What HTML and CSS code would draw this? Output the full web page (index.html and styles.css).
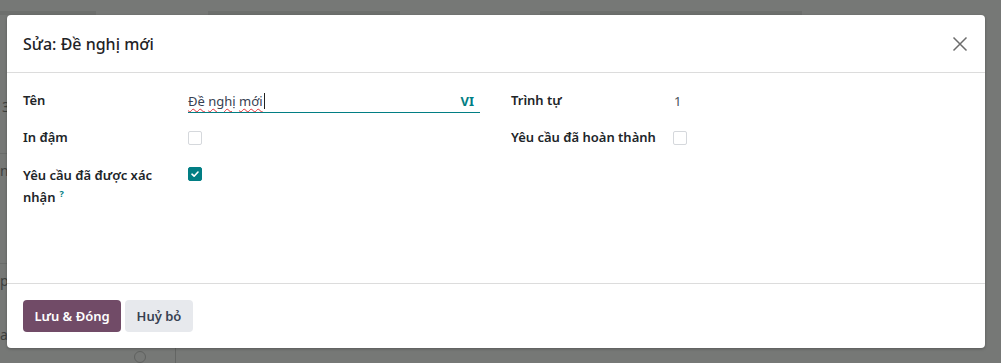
FILE: index.html
```html
<!DOCTYPE html>
<html lang="vi">
<head>
<meta charset="utf-8">
<title>Sửa: Đề nghị mới</title>
<link rel="stylesheet" href="styles.css">
</head>
<body>
<div class="backdrop">
  <div class="bg-strip">
    <span class="bg-box b1"></span>
    <span class="bg-box b2"></span>
    <span class="bg-box b3"></span>
  </div>
  <div class="bg-line l1"></div>
  <div class="bg-line l2"></div>
  <div class="bg-vline"></div>
  <div class="bg-circle"></div>
  <div class="bg-frag f1">3</div>
  <div class="bg-frag f2">n</div>
  <div class="bg-frag f3">pa</div>
  <div class="bg-frag f4">a</div>
</div>

<div class="modal">
  <header class="modal-header">
    <h4 class="modal-title">Sửa: Đề nghị mới</h4>
    <button class="close" aria-label="Đóng">
      <svg width="16" height="16" viewBox="0 0 16 16"><path d="M1.5 1.5 L14.5 14.5 M14.5 1.5 L1.5 14.5" stroke="#6c6c6c" stroke-width="1.5" fill="none"/></svg>
    </button>
  </header>
  <section class="modal-body">
    <div class="col">
      <div class="row">
        <label class="lbl">Tên</label>
        <div class="field input">
          <span class="val"><span class="sp">Đề</span> <span class="sp">nghị</span> <span class="sp">mới</span><span class="caret"></span></span>
          <span class="lang">VI</span>
        </div>
      </div>
      <div class="row">
        <label class="lbl">In đậm</label>
        <div class="field"><span class="cb"></span></div>
      </div>
      <div class="row">
        <label class="lbl tall">Yêu cầu đã được xác nhận<span class="help">?</span></label>
        <div class="field">
          <span class="cb checked">
            <svg width="10" height="10" viewBox="0 0 10 10"><path d="M2 5.2 L4.1 7.2 L8 3" stroke="#fff" stroke-width="1.6" fill="none" stroke-linecap="round" stroke-linejoin="round"/></svg>
          </span>
        </div>
      </div>
    </div>
    <div class="col">
      <div class="row">
        <label class="lbl rl">Trình tự</label>
        <div class="field"><span class="num">1</span></div>
      </div>
      <div class="row">
        <label class="lbl rl">Yêu cầu đã hoàn thành</label>
        <div class="field"><span class="cb"></span></div>
      </div>
    </div>
  </section>
  <footer class="modal-footer">
    <button class="btn primary">Lưu &amp; Đóng</button>
    <button class="btn secondary">Huỷ bỏ</button>
  </footer>
</div>
</body>
</html>
```

FILE: styles.css
```css
* { box-sizing: border-box; }
html, body { margin: 0; padding: 0; }
body {
  width: 1001px;
  height: 363px;
  overflow: hidden;
  background: #767876;
  font-family: "Noto Sans", "Open Sans", "Liberation Sans", sans-serif;
  color: #212529;
  position: relative;
}
.backdrop { position: absolute; inset: 0; }
.bg-strip { position: absolute; left: 0; top: 11px; width: 1001px; height: 4px; }
.bg-box { position: absolute; top: 0; height: 4px; background: #6d6f6d; }
.b1 { left: 0; width: 96px; }
.b2 { left: 208px; width: 192px; }
.b3 { left: 540px; width: 262px; }
.bg-line { position: absolute; left: 0; width: 7px; height: 1px; background: #6a6c6a; }
.l1 { top: 153px; }
.l2 { top: 263px; }
.bg-vline { position: absolute; left: 175px; top: 348px; width: 1px; height: 15px; background: #636563; }
.bg-circle { position: absolute; left: 134px; top: 351px; width: 12px; height: 12px; border: 1px solid #5f615f; border-radius: 50%; }
.bg-frag { position: absolute; left: 0; font-size: 14px; color: #3e403e; line-height: 1; }
.f1 { top: 100px; left: 2px; }
.f2 { top: 164px; }
.f3 { top: 274px; }
.f4 { top: 328px; }

.modal {
  position: absolute;
  left: 7px;
  top: 15px;
  width: 978px;
  height: 333px;
  background: #fff;
  border-radius: 4px;
  box-shadow: 0 1px 3px rgba(0,0,0,0.25);
  display: flex;
  flex-direction: column;
}
.modal-header {
  height: 58px;
  display: flex;
  align-items: center;
  justify-content: space-between;
  padding: 0 16px;
  border-bottom: 1px solid #dcdcdc;
}
.modal-title {
  margin: 0;
  font-size: 16px;
  font-weight: 500;
  color: #1f2326;
  line-height: 24px;
}
.close {
  border: 0;
  background: transparent;
  padding: 0;
  width: 16px;
  height: 16px;
  margin-right: 1px;
  display: flex;
}
.modal-body {
  flex: 1;
  display: grid;
  grid-template-columns: 457px 457px;
  column-gap: 31px;
  padding: 16px 16px 0 16px;
  align-items: start;
}
.row {
  display: flex;
  align-items: flex-start;
  min-height: 24px;
  margin-bottom: 13px;
}
.lbl {
  width: 165px;
  flex: none;
  font-size: 13px;
  font-weight: 600;
  line-height: 21px;
  padding-top: 1px;
  padding-right: 20px;
  color: #212529;
}
.lbl.tall { line-height: 22px; }
.lbl.rl { width: 162px; padding-right: 0; }
.help {
  display: inline-block;
  color: #017e84;
  font-size: 9px;
  font-weight: 700;
  line-height: 9px;
  height: 9px;
  margin-left: 4px;
  vertical-align: 5px;
}
.field {
  flex: 1;
  display: flex;
  align-items: center;
  min-height: 24px;
}
.input {
  border-bottom: 1px solid #017e84;
  justify-content: space-between;
  padding-right: 6px;
  height: 24px;
}
.val {
  font-size: 13px;
  color: #374151;
  display: inline-block;
  white-space: pre;
  line-height: 20px;
}
.sp {
  text-decoration: underline wavy #e0323a;
  text-decoration-thickness: 1px;
  text-underline-offset: 2px;
}
.caret {
  display: inline-block;
  width: 1px;
  height: 16px;
  background: #222;
  margin-left: 1px;
  vertical-align: -3px;
}
.lang {
  color: #017e84;
  font-weight: 700;
  font-size: 13px;
}
.num { font-size: 13px; color: #495057; padding-left: 1px; }
.cb {
  width: 14px;
  height: 14px;
  border: 1px solid #d5d8dc;
  border-radius: 2px;
  background: #fff;
  display: inline-flex;
  align-items: center;
  justify-content: center;
}
.cb.checked {
  background: #017e84;
  border-color: #017e84;
  margin-top: -2px;
}
.modal-footer {
  height: 65px;
  border-top: 1px solid #dcdcdc;
  display: flex;
  align-items: center;
  gap: 4px;
  padding: 0 16px;
}
.btn {
  height: 32px;
  border: 0;
  border-radius: 4px;
  font-family: inherit;
  font-size: 13px;
  font-weight: 600;
  padding: 0;
  white-space: nowrap;
  cursor: pointer;
}
.primary { background: #714b67; color: #fff; width: 98px; }
.secondary { background: #e7e9ed; color: #374151; width: 68px; }
```
